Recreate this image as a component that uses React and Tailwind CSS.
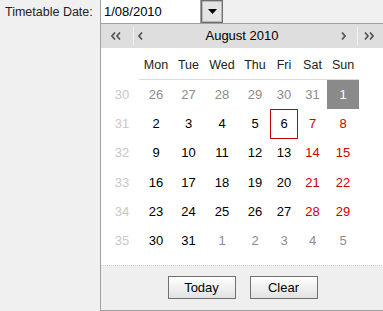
const weeks = [
  { wk: 30, days: [[26, "o"], [27, "o"], [28, "o"], [29, "o"], [30, "o"], [31, "o"], [1, "sel"]] },
  { wk: 31, days: [[2], [3], [4], [5], [6, "today"], [7, "we"], [8, "we"]] },
  { wk: 32, days: [[9], [10], [11], [12], [13], [14, "we"], [15, "we"]] },
  { wk: 33, days: [[16], [17], [18], [19], [20], [21, "we"], [22, "we"]] },
  { wk: 34, days: [[23], [24], [25], [26], [27], [28, "we"], [29, "we"]] },
  { wk: 35, days: [[30], [31], [1, "o"], [2, "o"], [3, "o"], [4, "o"], [5, "o"]] },
];

const dayNames = ["Mon", "Tue", "Wed", "Thu", "Fri", "Sat", "Sun"];

const Chevron = ({ dir = "left", double = false }) => {
  const pts = dir === "left" ? "4,0.5 1,4 4,7.5" : "1,0.5 4,4 1,7.5";
  return (
    <svg width={double ? 10 : 5} height="8" viewBox={double ? "0 0 10 8" : "0 0 5 8"} className="shrink-0">
      <polyline points={pts} fill="none" stroke="#555" strokeWidth="1.7" />
      {double && (
        <polyline points={pts} transform="translate(5 0)" fill="none" stroke="#555" strokeWidth="1.7" />
      )}
    </svg>
  );
};

const DayCell = ({ n, kind }) => {
  let cls = "text-black";
  if (kind === "o") cls = "text-[#8c8c8c]";
  if (kind === "we") cls = "text-[#cc0000]";
  if (kind === "sel") cls = "bg-[#8a8a8a] text-white";
  return (
    <div className={`h-[29.3px] flex items-center justify-center ${cls}`}>
      {kind === "today" ? (
        <span className="w-full h-full flex items-center justify-center border border-[#c00000]">{n}</span>
      ) : (
        n
      )}
    </div>
  );
};

export default function App() {
  return (
    <div className="relative w-[383px] h-[311px] overflow-hidden bg-[#f0f0f0] font-['Liberation_Sans',Arial,sans-serif]">
      {/* label + input */}
      <div className="flex items-start">
        <div className="w-[100px] pl-[5px] pt-[5px] text-[12.5px] leading-[15px] text-[#222]">Timetable Date:</div>
        <div className="flex -mt-px">
          <div className="w-[101px] h-[25px] border border-[#a0a0a0] bg-white pl-[3px] flex items-center text-[13px] text-black">
            1/08/2010
          </div>
          <button className="mt-px w-[22px] h-[23px] border border-[#6e6e6e] bg-[#e4e4e4] shadow-[inset_0_0_0_1px_#b8b8b8] flex items-center justify-center">
            <svg width="9" height="5" viewBox="0 0 9 5">
              <polygon points="0,0 9,0 4.5,5" fill="#000" />
            </svg>
          </button>
        </div>
      </div>

      {/* calendar popup */}
      <div className="absolute left-[100px] top-[23px] w-[285px] h-[288px] border border-[#a0a0a0] bg-white flex flex-col">
        <div className="h-[24px] bg-[#dedede] flex items-center pl-[10px] pr-[10px]">
          <Chevron dir="left" double />
          <div className="ml-[12px] w-px h-[18px] bg-[#f2f2f2]" />
          <div className="ml-[4px]">
            <Chevron dir="left" />
          </div>
          <div className="flex-1 text-center text-[13px] text-black">August 2010</div>
          <Chevron dir="right" />
          <div className="ml-[11px] w-px h-[18px] bg-[#f2f2f2]" />
          <div className="ml-[6px]">
            <Chevron dir="right" double />
          </div>
        </div>

        <div className="ml-[4px] grid grid-cols-[34px_34px_31px_36px_30px_28px_29px_32px] text-[13px]">
          <div className="h-[32px]" />
          {dayNames.map((d) => (
            <div
              key={d}
              className="h-[32px] pt-[10px] text-center text-[12.5px] leading-[15px] text-[#222] border-b border-[#dcdcdc]"
            >
              {d}
            </div>
          ))}
          {weeks.map((w) => (
            <div key={w.wk} className="contents">
              <div className="h-[29.3px] flex items-center justify-center text-[#c8c8c8]">{w.wk}</div>
              {w.days.map(([n, kind], i) => (
                <DayCell key={i} n={n} kind={kind} />
              ))}
            </div>
          ))}
        </div>

        <div className="mt-auto h-[45px] bg-[#efefef] border-t border-dotted border-[#d0d0d0] flex justify-center gap-[14px] pt-[10px]">
          <button className="w-[68px] h-[23px] border border-[#707070] bg-gradient-to-b from-white to-[#e2e2e2] text-[13px] text-black">
            Today
          </button>
          <button className="w-[68px] h-[23px] border border-[#707070] bg-gradient-to-b from-white to-[#e2e2e2] text-[13px] text-black">
            Clear
          </button>
        </div>
      </div>
    </div>
  );
}
